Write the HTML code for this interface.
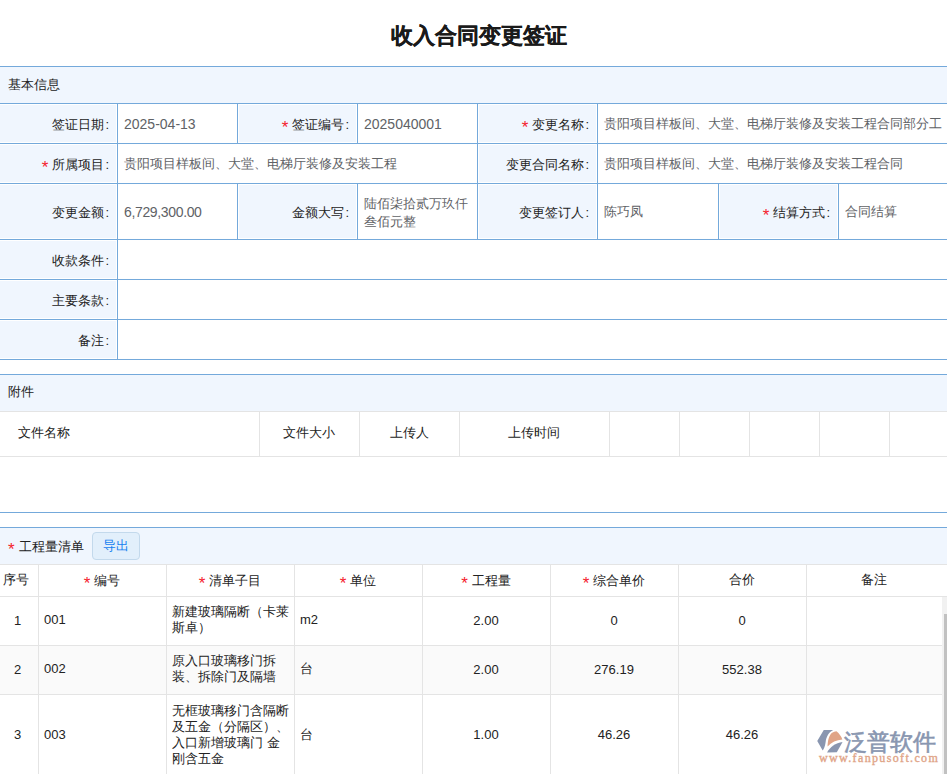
<!DOCTYPE html>
<html><head><meta charset="utf-8"><style>
html,body{margin:0;padding:0;background:#fff;}
body{width:947px;height:774px;overflow:hidden;position:relative;font-family:"Liberation Sans",sans-serif;font-size:13px;color:#333;}
body>div{position:absolute;box-sizing:border-box;}
.st{color:#f5222d;margin-right:4px;font-size:17px;position:relative;top:3px;line-height:10px;}
.c{margin-left:1px;}
.n{font-size:14px;}
</style></head><body>
<div style="left:0px;top:21px;width:947px;height:30px;display:flex;align-items:center;justify-content:center;font-size:22px;font-weight:bold;color:#1a1a1a;-webkit-text-stroke:0.25px #1a1a1a;padding-left:10px;box-sizing:border-box">收入合同变更签证</div>
<div style="left:0px;top:66px;width:947px;height:1px;background:#74a9db"></div>
<div style="left:0px;top:67px;width:947px;height:36px;background:#f0f6fe"></div>
<div style="left:8px;top:67px;width:200px;height:36px;display:flex;align-items:center;color:#222">基本信息</div>
<div style="left:0px;top:103px;width:947px;height:1px;background:#74a9db"></div>
<div style="left:0px;top:143px;width:947px;height:1px;background:#74a9db"></div>
<div style="left:0px;top:183px;width:947px;height:1px;background:#74a9db"></div>
<div style="left:0px;top:239px;width:947px;height:1px;background:#74a9db"></div>
<div style="left:0px;top:279px;width:947px;height:1px;background:#74a9db"></div>
<div style="left:0px;top:319px;width:947px;height:1px;background:#74a9db"></div>
<div style="left:0px;top:359px;width:947px;height:1px;background:#74a9db"></div>
<div style="left:0px;top:105px;width:116px;height:37px;background:#f0f6fe"></div>
<div style="left:117px;top:103px;width:1px;height:40px;background:#74a9db"></div>
<div style="left:0px;top:105px;width:109px;height:39px;display:flex;align-items:center;justify-content:flex-end;color:#222">签证日期<span class="c">:</span></div>
<div style="left:239px;top:105px;width:117px;height:37px;background:#f0f6fe"></div>
<div style="left:357px;top:103px;width:1px;height:40px;background:#74a9db"></div>
<div style="left:237px;top:103px;width:1px;height:40px;background:#74a9db"></div>
<div style="left:237px;top:105px;width:112px;height:39px;display:flex;align-items:center;justify-content:flex-end;color:#222"><span class="st">*</span>签证编号<span class="c">:</span></div>
<div style="left:479px;top:105px;width:117px;height:37px;background:#f0f6fe"></div>
<div style="left:597px;top:103px;width:1px;height:40px;background:#74a9db"></div>
<div style="left:477px;top:103px;width:1px;height:40px;background:#74a9db"></div>
<div style="left:477px;top:105px;width:112px;height:39px;display:flex;align-items:center;justify-content:flex-end;color:#222"><span class="st">*</span>变更名称<span class="c">:</span></div>
<div style="left:0px;top:145px;width:116px;height:37px;background:#f0f6fe"></div>
<div style="left:117px;top:143px;width:1px;height:40px;background:#74a9db"></div>
<div style="left:0px;top:145px;width:109px;height:39px;display:flex;align-items:center;justify-content:flex-end;color:#222"><span class="st">*</span>所属项目<span class="c">:</span></div>
<div style="left:479px;top:145px;width:117px;height:37px;background:#f0f6fe"></div>
<div style="left:597px;top:143px;width:1px;height:40px;background:#74a9db"></div>
<div style="left:477px;top:143px;width:1px;height:40px;background:#74a9db"></div>
<div style="left:477px;top:145px;width:112px;height:39px;display:flex;align-items:center;justify-content:flex-end;color:#222">变更合同名称<span class="c">:</span></div>
<div style="left:0px;top:185px;width:116px;height:53px;background:#f0f6fe"></div>
<div style="left:117px;top:183px;width:1px;height:56px;background:#74a9db"></div>
<div style="left:0px;top:185px;width:109px;height:55px;display:flex;align-items:center;justify-content:flex-end;color:#222">变更金额<span class="c">:</span></div>
<div style="left:239px;top:185px;width:117px;height:53px;background:#f0f6fe"></div>
<div style="left:357px;top:183px;width:1px;height:56px;background:#74a9db"></div>
<div style="left:237px;top:183px;width:1px;height:56px;background:#74a9db"></div>
<div style="left:237px;top:185px;width:112px;height:55px;display:flex;align-items:center;justify-content:flex-end;color:#222">金额大写<span class="c">:</span></div>
<div style="left:479px;top:185px;width:117px;height:53px;background:#f0f6fe"></div>
<div style="left:597px;top:183px;width:1px;height:56px;background:#74a9db"></div>
<div style="left:477px;top:183px;width:1px;height:56px;background:#74a9db"></div>
<div style="left:477px;top:185px;width:112px;height:55px;display:flex;align-items:center;justify-content:flex-end;color:#222">变更签订人<span class="c">:</span></div>
<div style="left:720px;top:185px;width:117px;height:53px;background:#f0f6fe"></div>
<div style="left:838px;top:183px;width:1px;height:56px;background:#74a9db"></div>
<div style="left:718px;top:183px;width:1px;height:56px;background:#74a9db"></div>
<div style="left:718px;top:185px;width:112px;height:55px;display:flex;align-items:center;justify-content:flex-end;color:#222"><span class="st">*</span>结算方式<span class="c">:</span></div>
<div style="left:0px;top:241px;width:116px;height:37px;background:#f0f6fe"></div>
<div style="left:117px;top:239px;width:1px;height:40px;background:#74a9db"></div>
<div style="left:0px;top:241px;width:109px;height:39px;display:flex;align-items:center;justify-content:flex-end;color:#222">收款条件<span class="c">:</span></div>
<div style="left:0px;top:281px;width:116px;height:37px;background:#f0f6fe"></div>
<div style="left:117px;top:279px;width:1px;height:40px;background:#74a9db"></div>
<div style="left:0px;top:281px;width:109px;height:39px;display:flex;align-items:center;justify-content:flex-end;color:#222">主要条款<span class="c">:</span></div>
<div style="left:0px;top:321px;width:116px;height:37px;background:#f0f6fe"></div>
<div style="left:117px;top:319px;width:1px;height:40px;background:#74a9db"></div>
<div style="left:0px;top:321px;width:109px;height:39px;display:flex;align-items:center;justify-content:flex-end;color:#222">备注<span class="c">:</span></div>
<div style="left:124px;top:104px;width:400px;height:39px;display:flex;align-items:center;color:#606266;line-height:18px;white-space:nowrap"><span class="n">2025-04-13</span></div>
<div style="left:364px;top:104px;width:400px;height:39px;display:flex;align-items:center;color:#606266;line-height:18px;white-space:nowrap"><span class="n">2025040001</span></div>
<div style="left:604px;top:104px;width:400px;height:39px;display:flex;align-items:center;color:#606266;line-height:18px;white-space:nowrap">贵阳项目样板间、大堂、电梯厅装修及安装工程合同部分工</div>
<div style="left:124px;top:144px;width:400px;height:39px;display:flex;align-items:center;color:#606266;line-height:18px;white-space:nowrap">贵阳项目样板间、大堂、电梯厅装修及安装工程</div>
<div style="left:604px;top:144px;width:400px;height:39px;display:flex;align-items:center;color:#606266;line-height:18px;white-space:nowrap">贵阳项目样板间、大堂、电梯厅装修及安装工程合同</div>
<div style="left:124px;top:184px;width:400px;height:55px;display:flex;align-items:center;color:#606266;line-height:18px;white-space:nowrap"><span class="n" style="letter-spacing:-0.35px">6,729,300.00</span></div>
<div style="left:364px;top:185px;width:400px;height:55px;display:flex;align-items:center;color:#606266;line-height:18px;white-space:nowrap">陆佰柒拾贰万玖仟<br>叁佰元整</div>
<div style="left:604px;top:184px;width:400px;height:55px;display:flex;align-items:center;color:#606266;line-height:18px;white-space:nowrap">陈巧凤</div>
<div style="left:845px;top:184px;width:400px;height:55px;display:flex;align-items:center;color:#606266;line-height:18px;white-space:nowrap">合同结算</div>
<div style="left:0px;top:374px;width:947px;height:1px;background:#74a9db"></div>
<div style="left:0px;top:375px;width:947px;height:36px;background:#f0f6fe"></div>
<div style="left:8px;top:374px;width:200px;height:36px;display:flex;align-items:center;color:#222">附件</div>
<div style="left:0px;top:411px;width:947px;height:1px;background:#e4e4e4"></div>
<div style="left:0px;top:456px;width:947px;height:1px;background:#e4e4e4"></div>
<div style="left:259px;top:411px;width:1px;height:45px;background:#e4e4e4"></div>
<div style="left:359px;top:411px;width:1px;height:45px;background:#e4e4e4"></div>
<div style="left:459px;top:411px;width:1px;height:45px;background:#e4e4e4"></div>
<div style="left:609px;top:411px;width:1px;height:45px;background:#e4e4e4"></div>
<div style="left:679px;top:411px;width:1px;height:45px;background:#e4e4e4"></div>
<div style="left:749px;top:411px;width:1px;height:45px;background:#e4e4e4"></div>
<div style="left:819px;top:411px;width:1px;height:45px;background:#e4e4e4"></div>
<div style="left:889px;top:411px;width:1px;height:45px;background:#e4e4e4"></div>
<div style="left:18px;top:411px;width:200px;height:44px;display:flex;align-items:center;color:#222">文件名称</div>
<div style="left:259px;top:411px;width:100px;height:44px;display:flex;align-items:center;justify-content:center;color:#222">文件大小</div>
<div style="left:359px;top:411px;width:100px;height:44px;display:flex;align-items:center;justify-content:center;color:#222">上传人</div>
<div style="left:459px;top:411px;width:150px;height:44px;display:flex;align-items:center;justify-content:center;color:#222">上传时间</div>
<div style="left:0px;top:512px;width:947px;height:1px;background:#74a9db"></div>
<div style="left:0px;top:527px;width:947px;height:1px;background:#74a9db"></div>
<div style="left:0px;top:528px;width:947px;height:36px;background:#f0f6fe"></div>
<div style="left:8px;top:529px;width:120px;height:36px;display:flex;align-items:center;color:#222"><span class="st">*</span>工程量清单</div>
<div style="left:92px;top:532px;width:48px;height:28px;box-sizing:border-box;border:1px solid #c3d9ec;background:#e2effb;border-radius:4px;display:flex;align-items:center;justify-content:center;color:#1580f0">导出</div>
<div style="left:0px;top:564px;width:947px;height:1px;background:#e4e4e4"></div>
<div style="left:0px;top:596px;width:947px;height:1px;background:#e4e4e4"></div>
<div style="left:0px;top:645px;width:947px;height:1px;background:#e4e4e4"></div>
<div style="left:0px;top:694px;width:947px;height:1px;background:#e4e4e4"></div>
<div style="left:0px;top:646px;width:947px;height:48px;background:#fafafa"></div>
<div style="left:0px;top:596px;width:947px;height:1px;background:#e4e4e4"></div>
<div style="left:0px;top:645px;width:947px;height:1px;background:#e4e4e4"></div>
<div style="left:38px;top:564px;width:1px;height:212px;background:#e4e4e4"></div>
<div style="left:166px;top:564px;width:1px;height:212px;background:#e4e4e4"></div>
<div style="left:294px;top:564px;width:1px;height:212px;background:#e4e4e4"></div>
<div style="left:422px;top:564px;width:1px;height:212px;background:#e4e4e4"></div>
<div style="left:550px;top:564px;width:1px;height:212px;background:#e4e4e4"></div>
<div style="left:678px;top:564px;width:1px;height:212px;background:#e4e4e4"></div>
<div style="left:806px;top:564px;width:1px;height:212px;background:#e4e4e4"></div>
<div style="left:3px;top:564px;width:40px;height:31px;display:flex;align-items:center;color:#222">序号</div>
<div style="left:38px;top:565px;width:128px;height:31px;display:flex;align-items:center;justify-content:center;color:#222"><span class="st">*</span>编号</div>
<div style="left:166px;top:565px;width:128px;height:31px;display:flex;align-items:center;justify-content:center;color:#222"><span class="st">*</span>清单子目</div>
<div style="left:294px;top:565px;width:128px;height:31px;display:flex;align-items:center;justify-content:center;color:#222"><span class="st">*</span>单位</div>
<div style="left:422px;top:565px;width:128px;height:31px;display:flex;align-items:center;justify-content:center;color:#222"><span class="st">*</span>工程量</div>
<div style="left:550px;top:565px;width:128px;height:31px;display:flex;align-items:center;justify-content:center;color:#222"><span class="st">*</span>综合单价</div>
<div style="left:678px;top:564px;width:128px;height:31px;display:flex;align-items:center;justify-content:center;color:#222">合价</div>
<div style="left:806px;top:564px;width:136px;height:31px;display:flex;align-items:center;justify-content:center;color:#222">备注</div>
<div style="left:0px;top:596px;width:35px;height:48px;display:flex;align-items:center;justify-content:center;color:#222">1</div>
<div style="left:44px;top:596px;width:122px;height:48px;display:flex;align-items:center;color:#222;line-height:16px">001</div>
<div style="left:172px;top:596px;width:122px;height:48px;display:flex;align-items:center;color:#222;line-height:16px">新建玻璃隔断（卡莱<br>斯卓）</div>
<div style="left:300px;top:596px;width:122px;height:48px;display:flex;align-items:center;color:#222;line-height:16px">m2</div>
<div style="left:422px;top:596px;width:128px;height:48px;display:flex;align-items:center;justify-content:center;color:#222">2.00</div>
<div style="left:550px;top:596px;width:128px;height:48px;display:flex;align-items:center;justify-content:center;color:#222">0</div>
<div style="left:678px;top:596px;width:128px;height:48px;display:flex;align-items:center;justify-content:center;color:#222">0</div>
<div style="left:812px;top:596px;width:135px;height:48px;display:flex;align-items:center;color:#222;line-height:16px"></div>
<div style="left:0px;top:645px;width:35px;height:48px;display:flex;align-items:center;justify-content:center;color:#222">2</div>
<div style="left:44px;top:645px;width:122px;height:48px;display:flex;align-items:center;color:#222;line-height:16px">002</div>
<div style="left:172px;top:645px;width:122px;height:48px;display:flex;align-items:center;color:#222;line-height:16px">原入口玻璃移门拆<br>装、拆除门及隔墙</div>
<div style="left:300px;top:645px;width:122px;height:48px;display:flex;align-items:center;color:#222;line-height:16px">台</div>
<div style="left:422px;top:645px;width:128px;height:48px;display:flex;align-items:center;justify-content:center;color:#222">2.00</div>
<div style="left:550px;top:645px;width:128px;height:48px;display:flex;align-items:center;justify-content:center;color:#222">276.19</div>
<div style="left:678px;top:645px;width:128px;height:48px;display:flex;align-items:center;justify-content:center;color:#222">552.38</div>
<div style="left:812px;top:645px;width:135px;height:48px;display:flex;align-items:center;color:#222;line-height:16px"></div>
<div style="left:0px;top:694px;width:35px;height:81px;display:flex;align-items:center;justify-content:center;color:#222">3</div>
<div style="left:44px;top:694px;width:122px;height:81px;display:flex;align-items:center;color:#222;line-height:16px">003</div>
<div style="left:172px;top:694px;width:122px;height:81px;display:flex;align-items:center;color:#222;line-height:16px">无框玻璃移门含隔断<br>及五金（分隔区）、<br>入口新增玻璃门 金<br>刚含五金</div>
<div style="left:300px;top:694px;width:122px;height:81px;display:flex;align-items:center;color:#222;line-height:16px">台</div>
<div style="left:422px;top:694px;width:128px;height:81px;display:flex;align-items:center;justify-content:center;color:#222">1.00</div>
<div style="left:550px;top:694px;width:128px;height:81px;display:flex;align-items:center;justify-content:center;color:#222">46.26</div>
<div style="left:678px;top:694px;width:128px;height:81px;display:flex;align-items:center;justify-content:center;color:#222">46.26</div>
<div style="left:812px;top:694px;width:135px;height:81px;display:flex;align-items:center;color:#222;line-height:16px"></div>
<div style="left:942px;top:597px;width:5px;height:177px;background:#f1f1f1"></div>
<div style="left:944px;top:614px;width:3px;height:160px;background:#c1c1c1"></div>
<svg style="position:absolute;left:814px;top:727px" width="32" height="28" viewBox="0 0 885 774">
<path fill="#8996b0" d="M270,85 L530,85 C410,150 340,260 320,430 C305,540 270,610 240,650 L90,390 Z"/>
<path fill="#e0a487" d="M375,540 C380,380 410,230 500,160 C540,130 580,115 620,115 C700,180 760,260 785,345 C620,360 480,420 375,540 Z"/>
<path fill="#8996b0" d="M360,705 C440,560 600,440 790,415 L630,695 Z"/>
</svg>
<div style="left:844px;top:728px;width:110px;height:28px;display:flex;align-items:center;color:#8996b0;font-size:23px;font-weight:normal;-webkit-text-stroke:0.6px #8996b0;white-space:nowrap">泛普软件</div>
<div style="left:819px;top:751px;width:130px;height:14px;display:flex;align-items:center;color:#e0a487;font-family:'Liberation Serif',serif;font-size:12px;font-weight:normal;-webkit-text-stroke:0.35px #e0a487;letter-spacing:1.35px;white-space:nowrap">www.fanpusoft.com</div>
</body></html>
